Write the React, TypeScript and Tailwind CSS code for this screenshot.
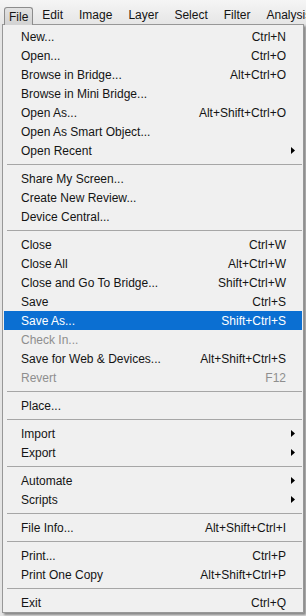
import React from 'react';

type Item = { label?: string; shortcut?: string; sub?: boolean; disabled?: boolean; active?: boolean; sep?: boolean };

const ITEMS: Item[] = [
    {label: "New...", shortcut: "Ctrl+N"},
    {label: "Open...", shortcut: "Ctrl+O"},
    {label: "Browse in Bridge...", shortcut: "Alt+Ctrl+O"},
    {label: "Browse in Mini Bridge..."},
    {label: "Open As...", shortcut: "Alt+Shift+Ctrl+O"},
    {label: "Open As Smart Object..."},
    {label: "Open Recent", sub: true},
    {sep: true},
    {label: "Share My Screen..."},
    {label: "Create New Review..."},
    {label: "Device Central..."},
    {sep: true},
    {label: "Close", shortcut: "Ctrl+W"},
    {label: "Close All", shortcut: "Alt+Ctrl+W"},
    {label: "Close and Go To Bridge...", shortcut: "Shift+Ctrl+W"},
    {label: "Save", shortcut: "Ctrl+S"},
    {label: "Save As...", shortcut: "Shift+Ctrl+S", active: true},
    {label: "Check In...", disabled: true},
    {label: "Save for Web & Devices...", shortcut: "Alt+Shift+Ctrl+S"},
    {label: "Revert", shortcut: "F12", disabled: true},
    {sep: true},
    {label: "Place..."},
    {sep: true},
    {label: "Import", sub: true},
    {label: "Export", sub: true},
    {sep: true},
    {label: "Automate", sub: true},
    {label: "Scripts", sub: true},
    {sep: true},
    {label: "File Info...", shortcut: "Alt+Shift+Ctrl+I"},
    {sep: true},
    {label: "Print...", shortcut: "Ctrl+P"},
    {label: "Print One Copy", shortcut: "Alt+Shift+Ctrl+P"},
    {sep: true},
    {label: "Exit", shortcut: "Ctrl+Q"},
];

const MENUS = ["Edit", "Image", "Layer", "Select", "Filter", "Analysis"];

const Arrow = () => (
    <svg width="4" height="7" viewBox="0 0 4 7" className="absolute right-[7px] top-[6px]">
        <polygon points="0,0 4,3.5 0,7" fill="#000"/>
    </svg>
);

const App = () => {
    return (
        <div className="w-[306px] h-[616px] overflow-hidden bg-[#e4e4e4] text-[12px] text-[#141414]" style={{fontFamily: '"Liberation Sans", Arial, sans-serif'}}>
            {/* menubar */}
            <div className="flex flex-row items-end h-[24px] pl-[4px] bg-gradient-to-b from-[#f5f5f5] to-[#e6e6e6] whitespace-nowrap">
                <div className="h-[18px] flex items-center px-[4px] border border-b-0 border-[#8c8c8c] rounded-t-[3px] bg-gradient-to-b from-[#e2e2e2] to-[#d2d2d2] mb-[-1px] relative z-10">File</div>
                <div className="flex flex-row ml-[1px] h-[18px] items-center">
                    {MENUS.map((m) => <div key={m} className="px-[8px]">{m}</div>)}
                </div>
            </div>
            {/* dropdown */}
            <div className="ml-[2px] w-[302px] border border-[#979797] bg-[#f0f0f0] pt-[2px] shadow-[2px_2px_2px_rgba(0,0,0,0.4)]">
                {ITEMS.map((it, i) => it.sep ? (
                    <div key={i} className="h-[9px] flex items-center pl-[4px] pr-[1px]">
                        <div className="w-full h-px bg-[#a6a6a6]"/>
                    </div>
                ) : (
                    <div key={i} className={`relative h-[19px] mx-[1px] flex flex-row items-center justify-between pl-[17px] pr-[16px] ${it.active ? "bg-[#0b6fd2] text-white" : ""} ${it.disabled ? "text-[#8e8e8e]" : ""}`}>
                        <span>{it.label}</span>
                        {it.shortcut && <span>{it.shortcut}</span>}
                        {it.sub && <Arrow/>}
                    </div>
                ))}
            </div>
        </div>
    );
};

export default App;
